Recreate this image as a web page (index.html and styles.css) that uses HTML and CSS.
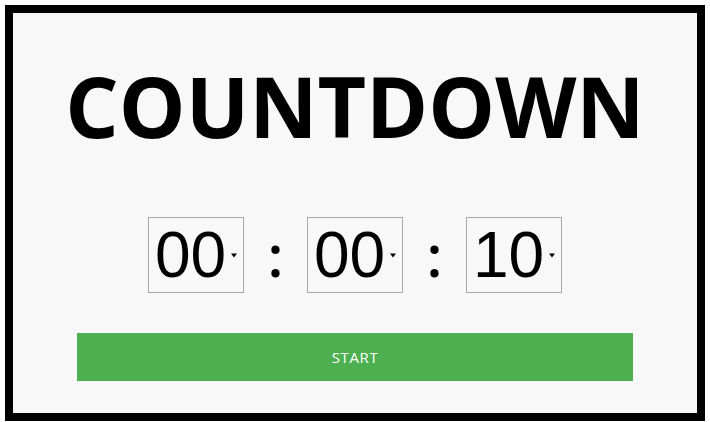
FILE: index.html
```html
<!DOCTYPE html>
<html>
<head>
<meta charset="utf-8">
<link rel="stylesheet" href="styles.css">
</head>
<body>
<div class="frame">
  <h1 class="title">COUNTDOWN</h1>
  <div class="timer">
    <select class="unit"><option>00</option></select>
    <span class="colon">:</span>
    <select class="unit"><option>00</option></select>
    <span class="colon">:</span>
    <select class="unit"><option>10</option></select>
  </div>
  <button class="start">START</button>
</div>
</body>
</html>
```
FILE: styles.css
```css
html, body {
  margin: 0;
  padding: 0;
  background: #ffffff;
}
body {
  padding: 5px;
}
.frame {
  width: 684px;
  height: 400px;
  border: 8px solid #000;
  background: #f8f8f8;
  display: flex;
  flex-direction: column;
  align-items: center;
  font-family: "Open Sans", sans-serif;
}
.title {
  margin: 43px 0 0;
  font-size: 84px;
  font-weight: 700;
  line-height: 100px;
  color: #000;
}
.timer {
  margin-top: 61px;
  display: flex;
  align-items: center;
}
.unit {
  -webkit-appearance: none;
  appearance: none;
  box-sizing: border-box;
  width: 96px;
  height: 76px;
  font-family: "Liberation Sans", Arial, sans-serif;
  font-size: 64px;
  border: 1px solid #a9a9a9;
  background-color: #f8f8f8;
  background-image: url("data:image/svg+xml,%3Csvg xmlns='http://www.w3.org/2000/svg' width='6' height='5' viewBox='0 0 6 5'%3E%3Cpath d='M0 0.5H6L3 4.5Z' fill='%23000'/%3E%3C/svg%3E");
  background-repeat: no-repeat;
  background-position: right 6px center;
  color: #000;
  padding: 0 0 0 6px;
  border-radius: 0;
}
.colon {
  width: 63px;
  text-align: center;
  font-size: 58px;
  font-weight: 600;
  line-height: 76px;
}
.start {
  margin-top: 40px;
  width: 556px;
  height: 48px;
  border: none;
  background: #4caf50;
  color: #fff;
  font-family: "Open Sans", sans-serif;
  font-size: 15px;
  letter-spacing: 0.6px;
}
```
